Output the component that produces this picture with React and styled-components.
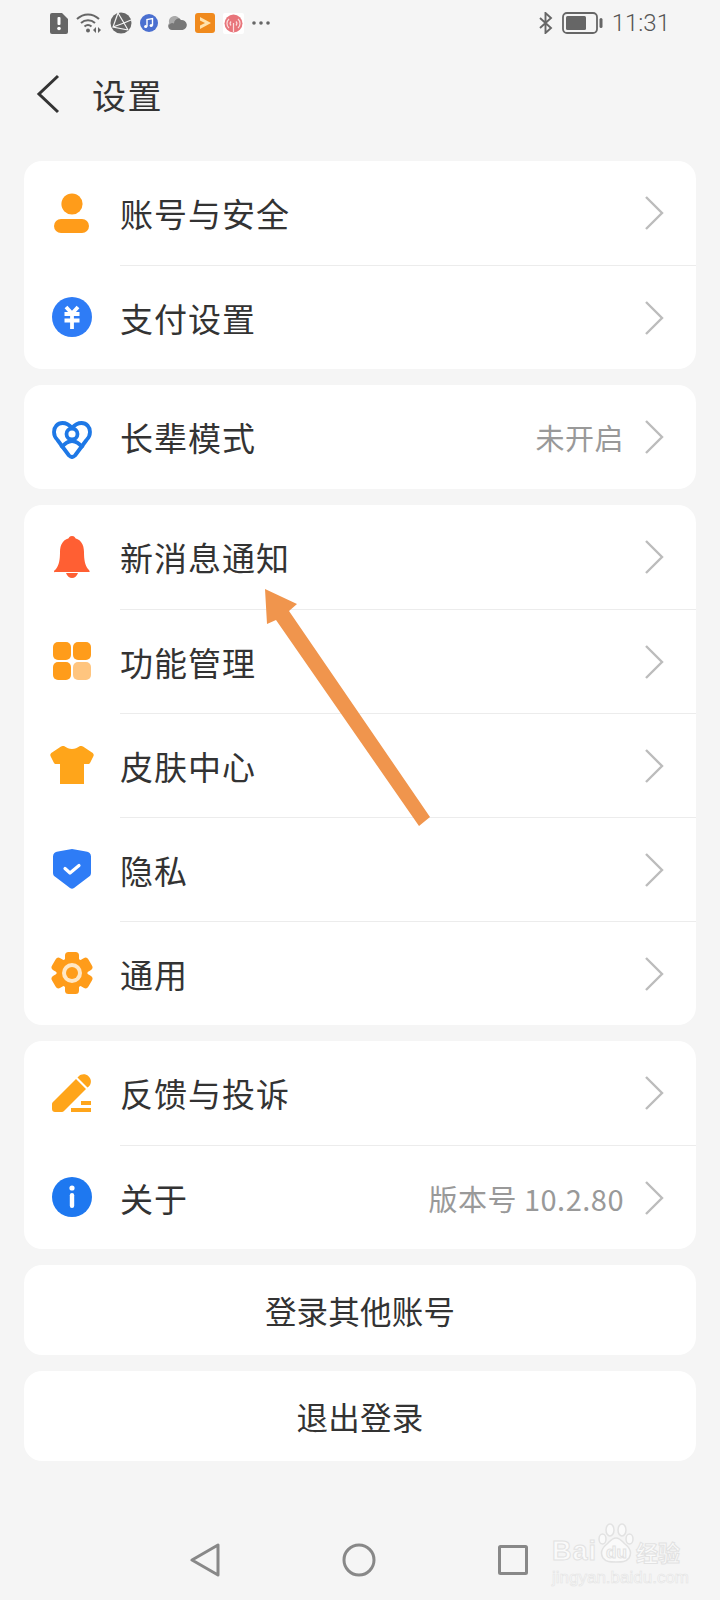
import React from 'react'
import styled, { createGlobalStyle } from 'styled-components'

const GlobalStyle = createGlobalStyle`
  html, body {
    margin: 0;
    padding: 0;
    background: #f5f5f5;
  }
  * {
    box-sizing: border-box;
  }
`
const Page = styled.div`
  position: relative;
  width: 720px;
  height: 1600px;
  display: flex;
  flex-direction: column;
  overflow: hidden;
  background: #f5f5f5;
  color: #333;
  font-family: "Noto Sans CJK SC", "Noto Sans", sans-serif;
`
const StatusBar = styled.div`
  height: 46px;
  padding: 0 50px;
  display: flex;
  align-items: center;
  justify-content: space-between;
  color: #666;
`
const StatusGroup = styled.div`
  display: flex;
  align-items: center;
  gap: ${props => props.gap || 6}px;
`
const Time = styled.span`
  font-family: Roboto, sans-serif;
  font-size: 24px;
  font-weight: 300;
  color: #555;
`
const Header = styled.div`
  height: 96px;
  padding-left: 36px;
  display: flex;
  align-items: center;
  gap: 32px;
`
const Title = styled.h1`
  margin: 0;
  font-size: 34px;
  font-weight: 400;
  letter-spacing: 1.5px;
`
const List = styled.div`
  margin-top: 19px;
  padding: 0 24px;
  display: flex;
  flex-direction: column;
  gap: 16px;
`
const Card = styled.div`
  background: #fff;
  border-radius: 18px;
  overflow: hidden;
`
const Row = styled.div`
  height: 104px;
  display: flex;
  align-items: stretch;
`
const IconSlot = styled.div`
  width: 96px;
  flex-shrink: 0;
  display: flex;
  align-items: center;
  justify-content: center;
`
const RowBody = styled.div`
  flex: 1;
  display: flex;
  align-items: center;
  padding-right: 32px;
  border-top: ${props => (props.$first ? 'none' : '1px solid #ececec')};
`
const Label = styled.span`
  flex: 1;
  font-size: 33px;
  letter-spacing: 1px;
`
const Hint = styled.span`
  font-size: 29px;
  letter-spacing: 0.5px;
  color: #999;
  margin-right: 20px;
`
const ActionButton = styled.div`
  height: 90px;
  display: flex;
  align-items: center;
  justify-content: center;
  background: #fff;
  border-radius: 18px;
  font-size: 31.5px;
  letter-spacing: 0.2px;
`
const NavBar = styled.div`
  margin-top: auto;
  height: 80px;
  display: flex;
  align-items: center;
  justify-content: center;
  gap: 122px;
  padding-right: 2px;
`
const Arrow = styled.svg`
  position: absolute;
  left: 0;
  top: 0;
  pointer-events: none;
`
const Watermark = styled.div`
  position: absolute;
  left: 552px;
  top: 1522px;
  width: 130px;
  color: #fafafa;
  font-family: "Liberation Sans", sans-serif;
  -webkit-text-stroke: 1px #e2e2e2;
`
const WatermarkLogo = styled.div`
  height: 41px;
  display: flex;
  align-items: flex-end;
`
const WatermarkBai = styled.span`
  width: 46px;
  font-size: 27px;
  font-weight: 700;
  line-height: 24px;
  letter-spacing: 1px;
`
const PawBox = styled.div`
  position: relative;
  width: 36px;
  height: 40px;
`
const PawText = styled.span`
  position: absolute;
  left: 8px;
  bottom: 2px;
  font-size: 17px;
  font-weight: 700;
  line-height: 17px;
`
const WatermarkCn = styled.span`
  font-family: "Noto Sans CJK SC", sans-serif;
  font-size: 22px;
  font-weight: 700;
  line-height: 24px;
  margin-left: 2px;
`
const WatermarkUrl = styled.div`
  margin-top: 6px;
  font-size: 17px;
  line-height: 18px;
  white-space: nowrap;
  -webkit-text-stroke: 0.6px #e4e4e4;
`

const Chevron = () => (
  <svg width="20" height="36" viewBox="0 0 20 36" fill="none">
    <path d="M2 2l16 16L2 34" stroke="#bcbcbc" strokeWidth="2.4" />
  </svg>
)

const PersonIcon = () => (
  <svg width="40" height="40" viewBox="0 0 40 40" fill="#ff9c1a">
    <circle cx="20" cy="11" r="10.6" />
    <rect x="2" y="26" width="35" height="14" rx="7" />
  </svg>
)

const YenIcon = () => (
  <svg width="40" height="40" viewBox="0 0 40 40">
    <circle cx="20" cy="20" r="20" fill="#2e7cf6" />
    <path d="M14 10l6 6.5 6-6.500M12.500 17h15M12.500 23.500h15M20 17v15" fill="none" stroke="#fff" strokeWidth="3.800" />
  </svg>
)

const HeartIcon = () => (
  <svg width="40" height="44" viewBox="0 -6 40 44" fill="none" stroke="#1e78e6" strokeWidth="3.8" strokeLinejoin="round">
    <path d="M20 7C17 3.500 14 2 10.500 2 5.500 2 2 6 2 11c0 3.500 1.500 6 3.500 8L17 34.500c2 2 4 2 6 0L34.500 19c2-2 3.500-4.500 3.500-8 0-5-3.500-9-8.500-9C26 2 23 3.500 20 7z" />
    <circle cx="20" cy="13" r="5.500" />
    <path d="M9 27c4-5 7.500-7 11-7s7 2 11 7" />
  </svg>
)

const BellIcon = () => (
  <svg width="36" height="42" viewBox="0 0 36 42" fill="#ff5f33">
    <circle cx="18" cy="3.500" r="3.500" />
    <path d="M18 2C9 2 6 9 6 16c0 8-1 13-4 17-1 1-2 1.500-2 2.500S1 36 2 36h32c1 0 2-.5 2-.5s-1-1.500-2-2.500c-3-4-4-9-4-17 0-7-3-14-12-14z" />
    <path d="M12 37h12c-1 3-3.500 5-6 5s-5-2-6-5z" />
  </svg>
)

const GridIcon = () => (
  <svg width="38" height="38" viewBox="0 0 38 38">
    <rect width="18" height="18" rx="5" fill="#ff9c1a" />
    <rect x="20" width="18" height="18" rx="5" fill="#ff9c1a" />
    <rect y="20" width="18" height="18" rx="5" fill="#ff9c1a" />
    <rect x="20" y="20" width="18" height="18" rx="5" fill="#ffc57f" />
  </svg>
)

const ShirtIcon = () => (
  <svg width="44" height="38" viewBox="0 0 44 38" fill="#ffa51a">
    <path d="M14 0c3 2 5 3 8 3s5-1 8-3c1 0 2 0 3 .5l9 6c1.500 1 2 2 1.500 3.500L40 17c-.5 1-1.500 1-2.500 1H34v20H10V18H6.500C5.500 18 4.500 18 4 17L.5 10C0 8.500.5 7.500 2 6.500l9-6c1-.5 2-.5 3-.5z" />
  </svg>
)

const ShieldIcon = () => (
  <svg width="38" height="40" viewBox="0 0 38 40">
    <path d="M19 0l14 2.500c3 .5 5 2 5 5V24c0 2-1 3-2.500 4L21 39c-1.500 1-2.500 1-4 0L2.500 28C1 27 0 26 0 24V7.500c0-3 2-4.500 5-5z" fill="#2e7cf6" />
    <path d="M12 19.500l5 4.500 9-7.500" fill="none" stroke="#fff" strokeWidth="3.200" strokeLinecap="round" strokeLinejoin="round" />
  </svg>
)

const GearIcon = () => (
  <svg width="42" height="42" viewBox="0 0 42 42">
    {[0, 60, 120, 180, 240, 300].map(angle => (
      <rect key={angle} x="14" y="0" width="14" height="12" rx="3.500" fill="#ff9c1a" transform={`rotate(${angle} 21 21)`} />
    ))}
    <circle cx="21" cy="21" r="15.500" fill="#ff9c1a" />
    <circle cx="21" cy="21" r="10" fill="#ffe7c6" />
    <circle cx="21" cy="21" r="6" fill="#ff9c1a" />
  </svg>
)

const PenIcon = () => (
  <svg width="40" height="40" viewBox="0 0 40 40" fill="#ffa51a">
    <path d="M2 28L24 6l10 10-22 22c-.8.8-1.500 1-2.500 1H3c-1.700 0-3-1.300-3-3v-5c0-1 .8-2 2-3z" />
    <path d="M26.500 3.500c2.500-2.800 7-3 10-.3 3.200 3 3.200 7.500.3 10.300l-1.300 1L25.500 4.500z" />
    <rect x="29" y="28" width="10" height="4" />
    <rect x="19" y="35" width="20" height="4" />
  </svg>
)

const InfoIcon = () => (
  <svg width="40" height="40" viewBox="0 0 40 40">
    <circle cx="20" cy="20" r="20" fill="#1e78f0" />
    <circle cx="20" cy="11" r="2.600" fill="#fff" />
    <rect x="17.800" y="16" width="4.400" height="15" rx="2.200" fill="#fff" />
  </svg>
)

const AlertIcon = () => (
  <svg width="18" height="21" viewBox="0 0 18 21">
    <path d="M2 0h10l6 6v13a2 2 0 0 1-2 2H2a2 2 0 0 1-2-2V2a2 2 0 0 1 2-2z" fill="#666" />
    <rect x="7.500" y="4" width="3" height="8" rx="1" fill="#fff" />
    <circle cx="9" cy="15.500" r="1.800" fill="#fff" />
  </svg>
)

const WifiIcon = () => (
  <svg width="26" height="22" viewBox="0 0 26 22" fill="none" stroke="#666" strokeWidth="2">
    <path d="M1 7c6.500-6 15.500-6 22 0M5 11c4-3.600 10-3.600 14 0M8.500 14.500c2-1.700 5-1.700 7 0" />
    <circle cx="12" cy="18.500" r="2" fill="#666" stroke="none" />
    <path d="M20 15l-3 3 3 3zM22 15l3 3-3 3z" fill="#666" stroke="none" />
  </svg>
)

const GlobeIcon = () => (
  <svg width="22" height="22" viewBox="0 0 22 22">
    <circle cx="11" cy="11" r="10.500" fill="#666" />
    <path d="M8 1l-5 14 15 3M8 1l6 10 4 7M3 15l11-4 7-3" fill="none" stroke="#f5f5f5" strokeWidth="1.200" />
  </svg>
)

const MusicIcon = () => (
  <svg width="18" height="18" viewBox="0 0 18 18">
    <circle cx="9" cy="9" r="9" fill="#4a6fd0" />
    <path d="M7 12.500V5.500l5.500-1v7" fill="none" stroke="#fff" strokeWidth="1.400" />
    <circle cx="5.700" cy="12.500" r="1.600" fill="#fff" />
    <circle cx="11.200" cy="11.500" r="1.600" fill="#fff" />
  </svg>
)

const CloudIcon = () => (
  <svg width="21" height="14" viewBox="0 0 21 14">
    <path d="M6 14a4 4 0 0 1-1-7.800A5.500 5.500 0 0 1 15 4a4.500 4.500 0 0 1 1.500 10z" fill="#777" />
    <path d="M3 6.500A5.500 5.500 0 0 1 13 2.500 5 5 0 0 0 8 7.500 3.500 3.500 0 0 0 3 9z" fill="#aaa" />
  </svg>
)

const VideoIcon = () => (
  <svg width="20" height="20" viewBox="0 0 20 20">
    <rect width="20" height="20" rx="3" fill="#f08a1d" />
    <path d="M5 4l11 6-11 6v-3.500l5-2.500-5-2.500z" fill="#ffe2ae" />
  </svg>
)

const RadioIcon = () => (
  <svg width="21" height="21" viewBox="0 0 21 21">
    <rect width="21" height="21" rx="2" fill="#fff" />
    <circle cx="10.500" cy="10.500" r="9" fill="#e8757b" />
    <path d="M10.500 10v9M6 15a6 6 0 0 1 0-9M15 15a6 6 0 0 0 0-9M8 12.500a3 3 0 0 1 0-4M13 12.500a3 3 0 0 0 0-4" fill="none" stroke="#fbdcdc" strokeWidth="1.200" />
  </svg>
)

const DotsIcon = () => (
  <svg width="18" height="4" viewBox="0 0 18 4" fill="#666">
    <circle cx="2" cy="2" r="1.800" />
    <circle cx="9" cy="2" r="1.800" />
    <circle cx="16" cy="2" r="1.800" />
  </svg>
)

const BluetoothIcon = () => (
  <svg width="14" height="22" viewBox="0 0 14 22" fill="none" stroke="#666" strokeWidth="1.900">
    <path d="M1 6l11 10-5.500 5V1L12 6 1 16" />
  </svg>
)

const BatteryIcon = () => (
  <svg width="41" height="22" viewBox="0 0 41 22">
    <rect x="1" y="1" width="34" height="20" rx="4" fill="none" stroke="#666" strokeWidth="1.800" />
    <rect x="4" y="4" width="20" height="14" rx="1.500" fill="#666" />
    <rect x="37.500" y="6" width="3" height="10" rx="1.500" fill="#666" />
  </svg>
)

const BackIcon = () => (
  <svg width="24" height="40" viewBox="0 0 24 40" fill="none">
    <path d="M22 2L3 20l19 18" stroke="#333" strokeWidth="3" />
  </svg>
)

const BaiduPaw = () => (
  <svg width="36" height="40" viewBox="0 0 36 40" fill="#fafafa" stroke="#e2e2e2" strokeWidth="1.500">
    <ellipse cx="12" cy="7" rx="4" ry="6" />
    <ellipse cx="24" cy="7" rx="4" ry="6" />
    <ellipse cx="4.500" cy="16" rx="3.500" ry="5" />
    <ellipse cx="31.500" cy="16" rx="3.500" ry="5" />
    <path d="M18 15c4 0 6 3 9 6 5 4 7 9 4 14-3 4-7 4-13 4s-10 0-13-4c-3-5-1-10 4-14 3-3 5-6 9-6z" />
  </svg>
)

const sections = [
  [
    { icon: <PersonIcon />, label: '账号与安全' },
    { icon: <YenIcon />, label: '支付设置' },
  ],
  [{ icon: <HeartIcon />, label: '长辈模式', hint: '未开启' }],
  [
    { icon: <BellIcon />, label: '新消息通知' },
    { icon: <GridIcon />, label: '功能管理' },
    { icon: <ShirtIcon />, label: '皮肤中心' },
    { icon: <ShieldIcon />, label: '隐私' },
    { icon: <GearIcon />, label: '通用' },
  ],
  [
    { icon: <PenIcon />, label: '反馈与投诉' },
    { icon: <InfoIcon />, label: '关于', hint: '版本号 10.2.80' },
  ],
]

export default function App() {
  return (
    <Page>
      <GlobalStyle />
      <StatusBar>
        <StatusGroup gap={8}>
          <AlertIcon />
          <WifiIcon />
          <GlobeIcon />
          <MusicIcon />
          <CloudIcon />
          <VideoIcon />
          <RadioIcon />
          <DotsIcon />
        </StatusGroup>
        <StatusGroup gap={9}>
          <BluetoothIcon />
          <BatteryIcon />
          <Time>11:31</Time>
        </StatusGroup>
      </StatusBar>
      <Header>
        <BackIcon />
        <Title>设置</Title>
      </Header>
      <List>
        {sections.map((rows, i) => (
          <Card key={i}>
            {rows.map((row, j) => (
              <Row key={row.label}>
                <IconSlot>{row.icon}</IconSlot>
                <RowBody $first={j === 0}>
                  <Label>{row.label}</Label>
                  {row.hint && <Hint>{row.hint}</Hint>}
                  <Chevron />
                </RowBody>
              </Row>
            ))}
          </Card>
        ))}
        <ActionButton>登录其他账号</ActionButton>
        <ActionButton>退出登录</ActionButton>
      </List>
      <NavBar>
        <svg width="30" height="34" viewBox="0 0 30 34" fill="none" stroke="#888" strokeWidth="3" strokeLinejoin="round">
          <path d="M28 2v30L2 17z" />
        </svg>
        <svg width="34" height="34" viewBox="0 0 34 34" fill="none" stroke="#888" strokeWidth="3">
          <circle cx="17" cy="17" r="15" />
        </svg>
        <svg width="30" height="30" viewBox="0 0 30 30" fill="none" stroke="#888" strokeWidth="3" strokeLinejoin="round">
          <rect x="1.500" y="1.500" width="27" height="27" rx="1" />
        </svg>
      </NavBar>
      <Arrow width="720" height="1600" viewBox="0 0 720 1600">
        <path d="M265 589l32 15-8 7 141 206-11 9-143-206-9 4z" fill="#f0954d" />
      </Arrow>
      <Watermark>
        <WatermarkLogo>
          <WatermarkBai>Bai</WatermarkBai>
          <PawBox>
            <BaiduPaw />
            <PawText>du</PawText>
          </PawBox>
          <WatermarkCn>经验</WatermarkCn>
        </WatermarkLogo>
        <WatermarkUrl>jingyan.baidu.com</WatermarkUrl>
      </Watermark>
    </Page>
  )
}
